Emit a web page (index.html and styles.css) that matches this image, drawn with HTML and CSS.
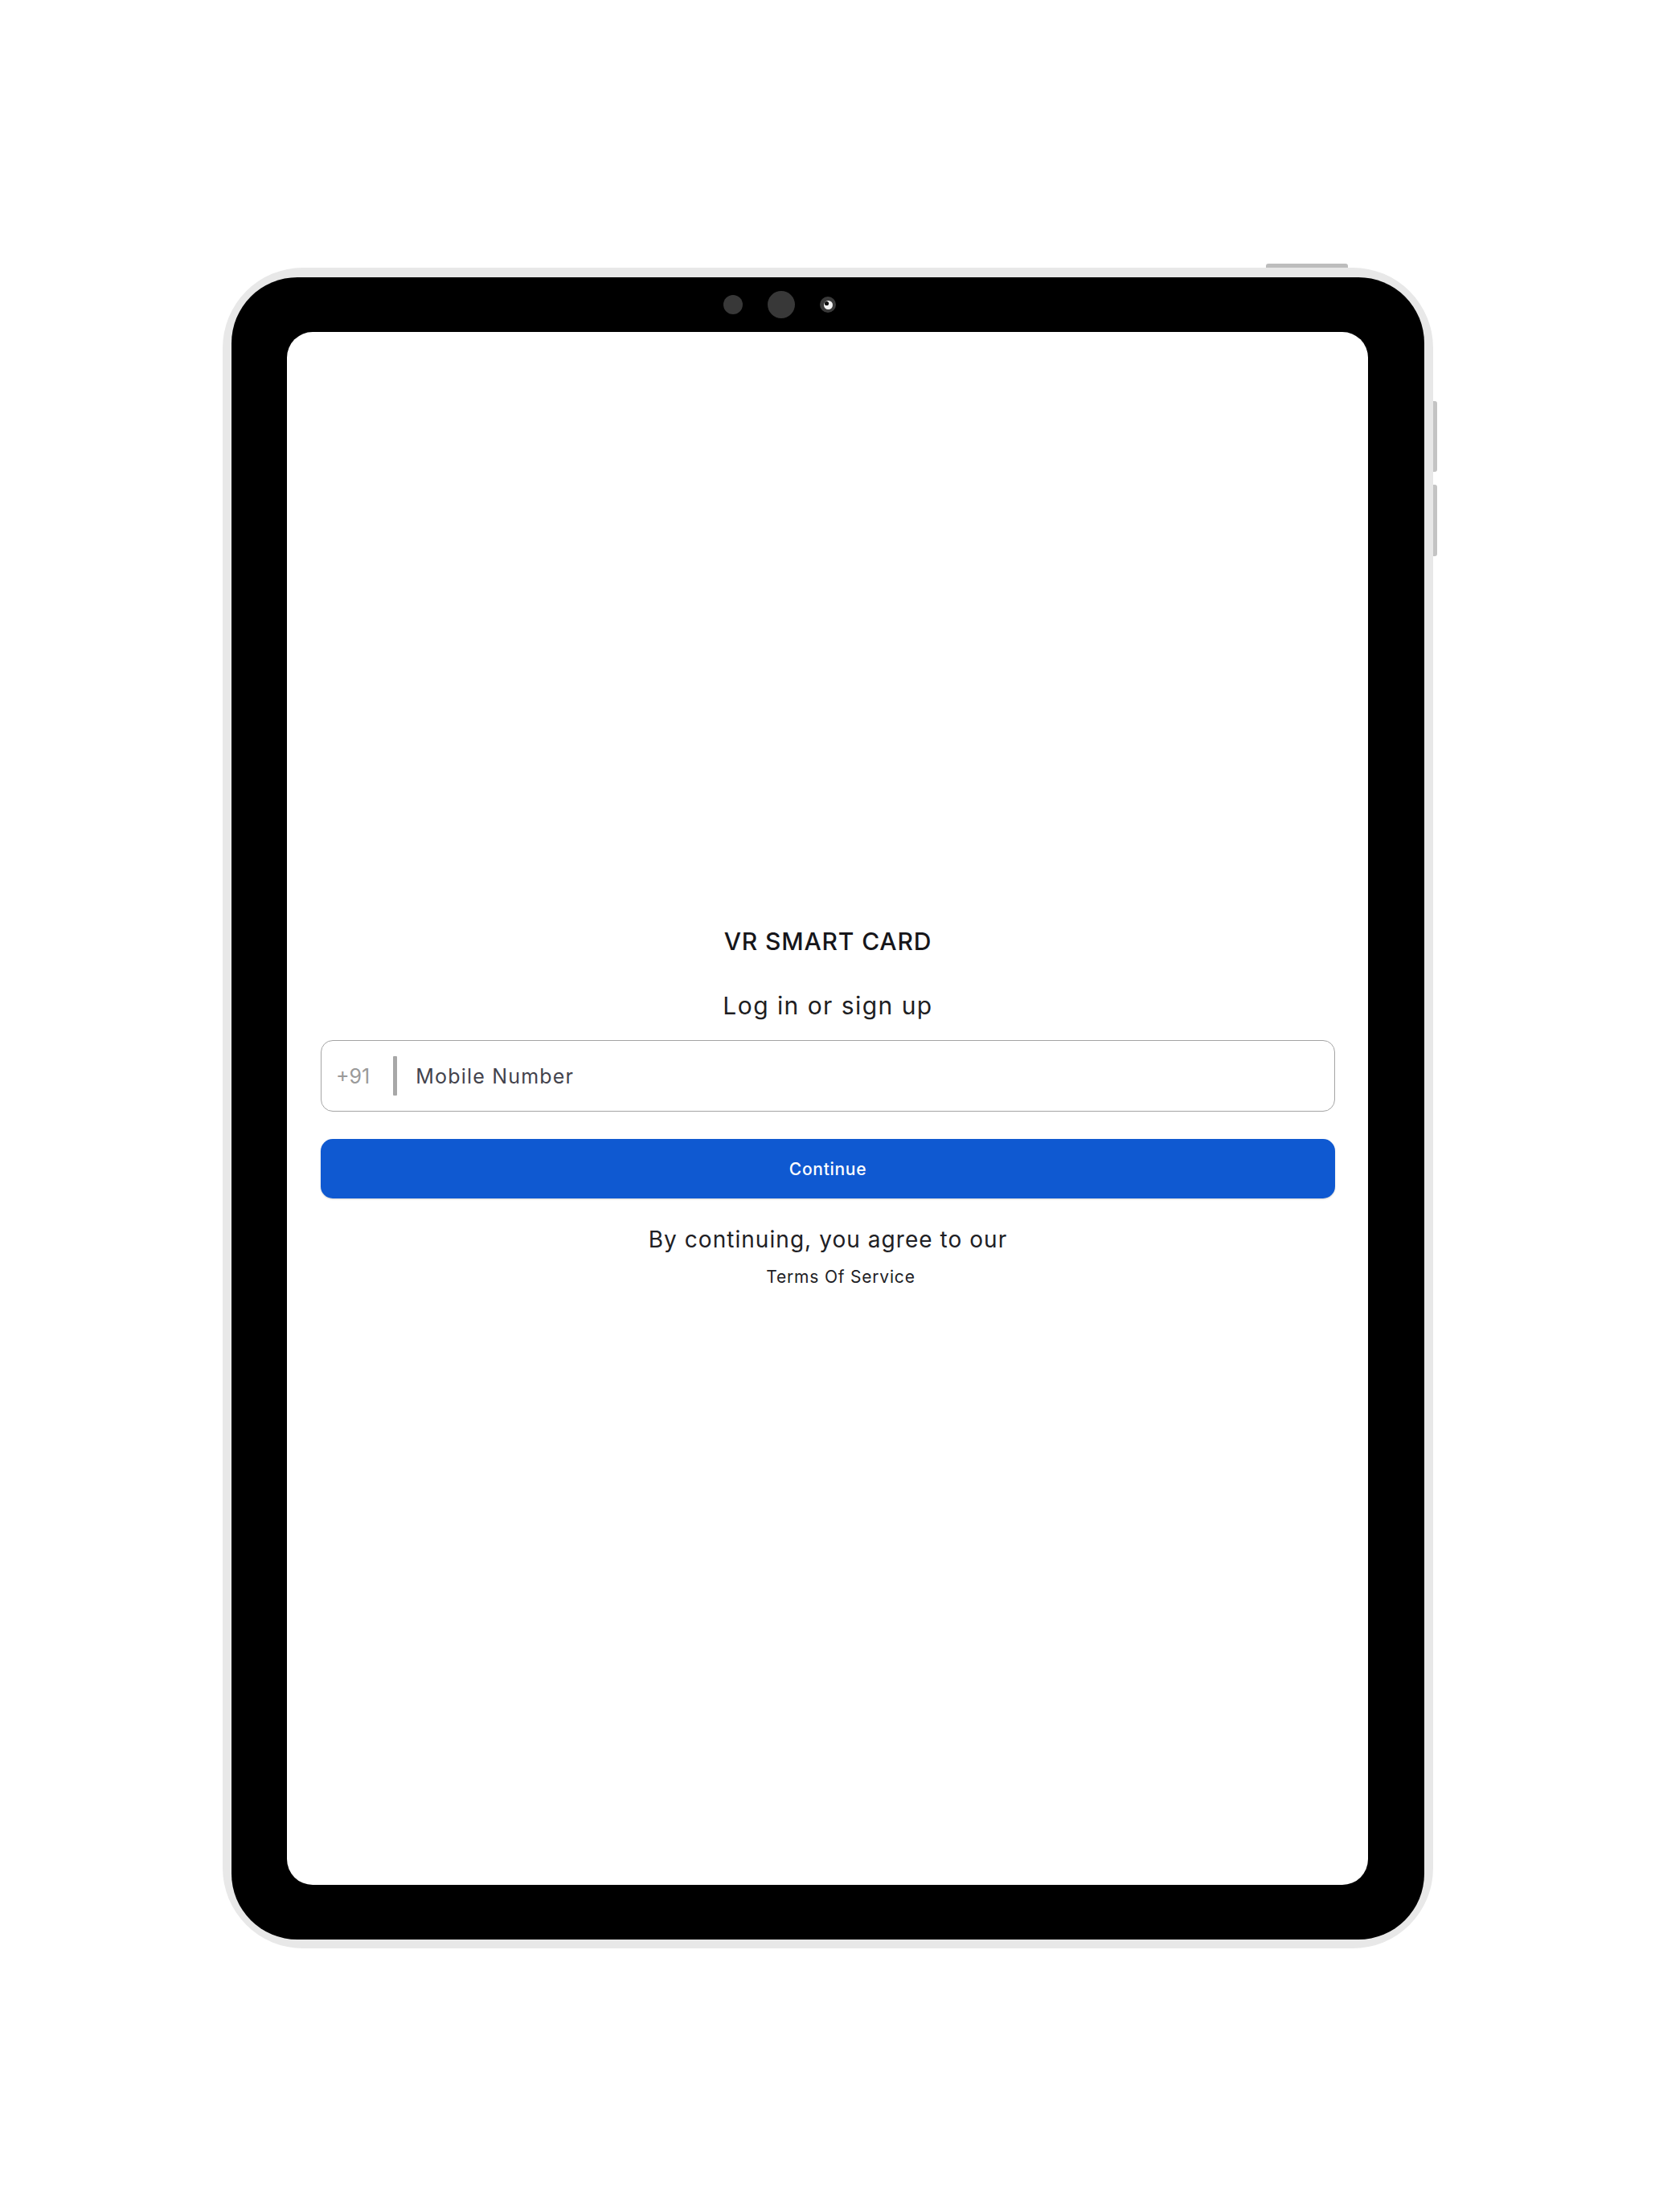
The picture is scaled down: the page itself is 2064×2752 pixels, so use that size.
FILE: index.html
```html
<!DOCTYPE html>
<html lang="en">
<head>
<meta charset="utf-8">
<title>VR Smart Card – Log in</title>
<link rel="stylesheet" href="styles.css">
</head>
<body>
<div class="stage">
  <div class="device">
    <span class="hw-top"></span>
    <span class="hw-side hw-vol-up"></span>
    <span class="hw-side hw-vol-down"></span>
    <div class="bezel">
      <div class="camera-row">
        <span class="dot dot-small"></span>
        <span class="dot dot-big"></span>
        <svg class="lens" width="22" height="22" viewBox="0 0 22 22">
          <circle cx="11" cy="11" r="10" fill="#3a3a3a"/>
          <circle cx="11.5" cy="11.5" r="5.5" fill="#f2f2f2"/>
          <circle cx="9.5" cy="9.5" r="2.6" fill="#111"/>
        </svg>
      </div>
      <div class="screen">
        <div class="login">
          <h1 class="brand">VR SMART CARD</h1>
          <h2 class="heading">Log in or sign up</h2>
          <label class="phone-field">
            <span class="code">+91</span>
            <span class="sep"></span>
            <input class="phone-input" type="tel" placeholder="Mobile Number">
          </label>
          <button class="continue" type="button">Continue</button>
          <p class="agree">By continuing, you agree to our</p>
          <a class="terms" href="#">Terms Of Service</a>
        </div>
      </div>
    </div>
  </div>
</div>
</body>
</html>
```

FILE: styles.css
```css
* { box-sizing: border-box; }

html, body {
  margin: 0;
  padding: 0;
  background: #ffffff;
}

body {
  font-family: "Inter", "Liberation Sans", sans-serif;
  color: #1e1e22;
}

.stage {
  width: 2064px;
  height: 2752px;
  padding: 333px 0 0 277px;
}

.device {
  position: relative;
  width: 1506px;
  height: 2091px;
  padding: 12px 11px 11px 11px;
  background: #e8e8e8;
  border-radius: 100px;
}

.hw-top {
  position: absolute;
  top: -5px;
  left: 1298px;
  width: 102px;
  height: 5px;
  background: #bdbdbd;
  border-radius: 3px 3px 0 0;
}

.hw-side {
  position: absolute;
  left: 1506px;
  width: 5px;
  background: #c4c4c4;
  border-radius: 0 3px 3px 0;
}

.hw-vol-up { top: 166px; height: 88px; }
.hw-vol-down { top: 270px; height: 89px; }

.bezel {
  display: flex;
  flex-direction: column;
  width: 1484px;
  height: 2068px;
  padding: 0 70px 68px 69px;
  background: #000000;
  border-radius: 82px;
}

.camera-row {
  display: flex;
  align-items: center;
  height: 68px;
  padding-left: 543px;
  gap: 31px;
}

.dot {
  display: block;
  border-radius: 50%;
  background: #383838;
}

.dot-small { width: 24px; height: 24px; }
.dot-big { width: 34px; height: 34px; }
.lens { display: block; margin-left: -1px; }

.screen {
  flex: 1;
  display: flex;
  flex-direction: column;
  justify-content: center;
  padding: 0 41px 4px 42px;
  background: #ffffff;
  border-radius: 32px;
}

.login {
  display: flex;
  flex-direction: column;
  align-items: center;
  width: 100%;
}

.brand {
  margin: 0;
  font-size: 30px;
  line-height: 36px;
  font-weight: 500;
  letter-spacing: 0.85px;
  color: #16161a;
}

.heading {
  margin: 44px 0 0;
  font-size: 30px;
  line-height: 36px;
  font-weight: 400;
  letter-spacing: 1.45px;
  color: #1e1e22;
}

.phone-field {
  display: flex;
  align-items: center;
  width: 100%;
  height: 89px;
  margin-top: 25px;
  padding: 0 20px 0 18px;
  border: 1.5px solid #a4a4a4;
  border-radius: 15px;
  background: #ffffff;
}

.code {
  font-size: 25px;
  line-height: 30px;
  color: #9a9a9a;
  letter-spacing: 0;
}

.sep {
  display: block;
  width: 5px;
  height: 49px;
  margin: 0 23px 0 29px;
  background: #a8a8a8;
  border-radius: 1px;
}

.phone-input {
  flex: 1;
  border: 0;
  outline: 0;
  padding: 0;
  background: transparent;
  font-family: "Inter", "Liberation Sans", sans-serif;
  font-size: 25px;
  line-height: 30px;
  color: #3e3e48;
  letter-spacing: 1.2px;
}

.phone-input::placeholder {
  color: #43434d;
  opacity: 1;
}

.continue {
  display: flex;
  align-items: center;
  justify-content: center;
  width: 100%;
  height: 74px;
  margin-top: 34px;
  border: 0;
  border-radius: 15px;
  background: #0f59d1;
  box-shadow: 0 1px 2px rgba(0, 0, 0, 0.18);
  font-family: "Inter", "Liberation Sans", sans-serif;
  font-size: 21px;
  font-weight: 500;
  color: #ffffff;
  letter-spacing: 0.7px;
}

.agree {
  margin: 34px 0 0;
  font-size: 28px;
  line-height: 34px;
  font-weight: 400;
  letter-spacing: 1.05px;
  color: #202024;
}

.terms {
  display: block;
  margin-top: 17px;
  padding-left: 32px;
  font-size: 21px;
  line-height: 25px;
  color: #202024;
  text-decoration: none;
  letter-spacing: 0.8px;
}
```
